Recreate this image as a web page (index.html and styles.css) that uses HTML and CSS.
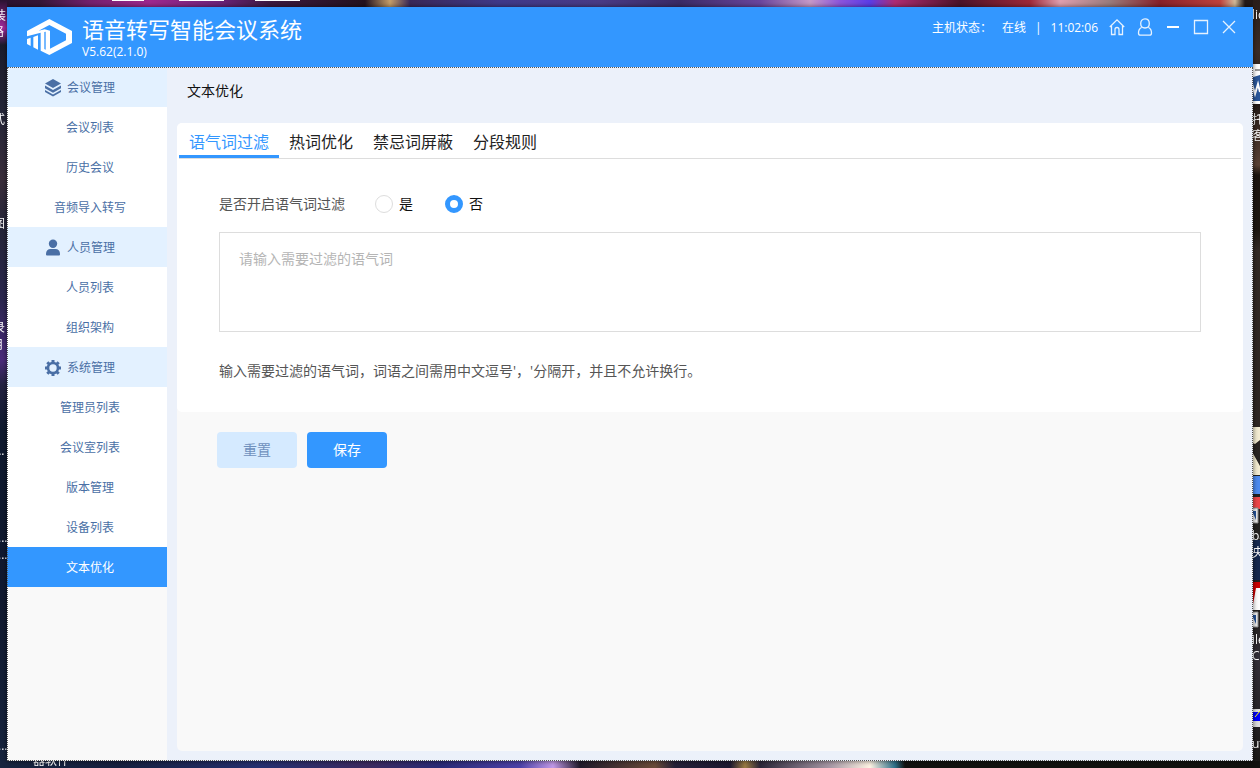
FILE: index.html
```html
<!DOCTYPE html>
<html lang="zh-CN">
<head>
<meta charset="utf-8">
<title>语音转写智能会议系统</title>
<link rel="stylesheet" href="styles.css">
</head>
<body>
<div class="desktop" aria-hidden="true">
  <div class="strip strip-top"></div>
  <div class="strip strip-left"></div>
  <div class="strip strip-right"></div>
  <div class="strip strip-bottom"></div>
  <svg class="tiles" width="30" height="768" viewBox="0 0 30 768">
    <path fill="#fff" d="M20 64h10v40H20z"/><path fill="#999" d="M25 69h5v2h-5z"/>
    <path fill="#2b579a" d="M20 78l10-3v26H20z"/><path stroke="#fff" stroke-width="2" fill="none" d="M22 84l3 10 3-10 2 8"/>
    <path fill="#f3ecd2" d="M20 427h10v13l-5 4-5-2zM20 448l10 18v9H20z"/>
    <path fill="#4d8bf0" d="M20 476h10v18H20z"/><path fill="#ee4548" d="M20 497h10v12H20z"/>
    <path fill="#15284f" d="M20 540h10v40H20z"/><path fill="#c00" d="M20 582h10v28H20z"/><path fill="#fff" d="M26 588h4v22h-8z"/>
    <path fill="#eee" stroke="#888" d="M20 508h8v15h-8zM20 612h8v15h-8z"/><path fill="#245399" d="M22 511h4v9zM22 615h4v9z"/>
    <path fill="#ddd" d="M20 709h10v18H20z"/><path fill="#00f" d="M20 712h10v9H20z"/><path stroke="#ff0" d="M25 717l5-6"/>
  </svg>
  <span class="label l1">装</span><span class="label l2">路</span><span class="label l3">式</span><span class="label l4">图</span><span class="label l5">录</span><span class="label l6">用</span>
  <span class="label d1">...</span><span class="label d2">...</span><span class="label d3">...</span><span class="label d4">...</span>
  <span class="label b1">器软件</span>
  <span class="label r1">lic</span><span class="label r2">托</span><span class="label r3">客</span><span class="label r4">ba</span><span class="label r5">央</span><span class="label r6">ile</span><span class="label r7">C</span><span class="label r8">ut</span>
</div>

<div class="window">
  <header class="titlebar">
    <svg class="logo" width="46" height="36" viewBox="9 11 138 108">
      <path fill="#fff" fill-rule="evenodd" d="M9 47L76 11L144 47V83L76 119L50 106V52L9 63ZM78 46V100L126 75V55L76 29L44 46L62 42Z"/>
      <path fill="#3397ff" d="M61 50L65 49V103L61 101Z"/>
      <path fill="#fff" d="M9 71L20 67V92L9 86ZM28 65L42 60V103L28 96Z"/>
    </svg>
    <div class="brand">
      <h1 class="brand-name">语音转写智能会议系统</h1>
      <span class="brand-version">V5.62(2.1.0)</span>
    </div>
    <div class="status">
      <span class="status-text">主机状态：</span><span class="status-text online">在线</span><span class="status-text divider">|</span><time class="status-text">11:02:06</time>
      <button class="icon-button" aria-label="主页"><svg width="16" height="18" viewBox="0 0 16 18"><path d="M.8 9L8 1.8 15.200 9M2.500 8v8.500h3.500v-5a2 2 0 0 1 4 0v5h3.500V8"/></svg></button>
      <button class="icon-button" aria-label="用户"><svg width="16" height="18" viewBox="0 0 16 18"><path d="M8 .8c2.600 0 4.300 2 4.300 4.700S10.500 10 8 10 3.700 8.200 3.700 5.500 5.400 .8 8 .8zM4.500 9.500C2.500 10.500 1.500 12.500 1.500 15c0 1.500 .5 2.200 2 2.200h9c1.500 0 2-.7 2-2.200 0-2.500-1-4.500-3-5.500"/></svg></button>
      <button class="icon-button" aria-label="最小化"><svg width="16" height="18" viewBox="0 0 16 18"><path class="bar" d="M2 9h12"/></svg></button>
      <button class="icon-button" aria-label="最大化"><svg width="16" height="18" viewBox="0 0 16 18"><path d="M1.500 2.500h13v13h-13z"/></svg></button>
      <button class="icon-button" aria-label="关闭"><svg width="16" height="18" viewBox="0 0 16 18"><path d="M2 3l12 12M14 3L2 15"/></svg></button>
    </div>
  </header>

  <div class="workspace">
    <nav class="sidebar">
      <div class="group"><svg width="18" height="18" viewBox="0 0 18 18"><path fill="currentColor" d="M9 0l8 4.500-8 4.500-8-4.500zM1 6.500l8 4.500 8-4.500v2.800l-8 4.500-8-4.500zM1 11l8 4.500 8-4.500v2L9 17.500 1 13z"/></svg>会议管理</div>
      <a class="item" href="#">会议列表</a>
      <a class="item" href="#">历史会议</a>
      <a class="item" href="#">音频导入转写</a>
      <div class="group"><svg width="18" height="18" viewBox="0 0 18 18"><circle cx="9" cy="4.700" r="4.200" fill="currentColor"/><path fill="currentColor" d="M2 15.500v-1c0-2.500 2-4.500 4.500-4.500h5c2.500 0 4.500 2 4.500 4.500v1q0 1-1 1h-12q-1 0-1-1z"/></svg>人员管理</div>
      <a class="item" href="#">人员列表</a>
      <a class="item" href="#">组织架构</a>
      <div class="group"><svg width="18" height="18" viewBox="0 0 18 18"><circle cx="9" cy="9" r="5" fill="none" stroke="currentColor" stroke-width="2.600"/><path stroke="currentColor" stroke-width="3" d="M9 1v3M9 14v3M1 9h3M14 9h3M3.300 3.300l2 2M12.700 12.700l2 2M3.300 14.700l2-2M12.700 5.300l2-2"/></svg>系统管理</div>
      <a class="item" href="#">管理员列表</a>
      <a class="item" href="#">会议室列表</a>
      <a class="item" href="#">版本管理</a>
      <a class="item" href="#">设备列表</a>
      <a class="item active" href="#" aria-current="page">文本优化</a>
    </nav>

    <main class="content">
      <h2 class="page-title">文本优化</h2>
      <form class="panel">
        <div class="card">
          <div class="tabs" role="tablist">
            <button type="button" class="tab selected" role="tab" aria-selected="true">语气词过滤</button>
            <button type="button" class="tab" role="tab">热词优化</button>
            <button type="button" class="tab" role="tab">禁忌词屏蔽</button>
            <button type="button" class="tab" role="tab">分段规则</button>
          </div>
          <div class="fields">
            <div class="choice" role="radiogroup" aria-labelledby="filter-label">
              <span class="choice-label" id="filter-label">是否开启语气词过滤</span>
              <label class="option"><input type="radio" name="filter" value="yes">是</label>
              <label class="option"><input type="radio" name="filter" value="no" checked>否</label>
            </div>
            <textarea class="words" placeholder="请输入需要过滤的语气词" aria-label="语气词"></textarea>
            <p class="help">输入需要过滤的语气词，词语之间需用中文逗号'，'分隔开，并且不允许换行。</p>
          </div>
        </div>
        <div class="actions">
          <button type="reset" class="button light">重置</button>
          <button type="button" class="button primary">保存</button>
        </div>
      </form>
    </main>
  </div>
</div>
</body>
</html>
```
FILE: styles.css
```css
* { box-sizing: border-box; }

body {
  margin: 0;
  min-height: 100vh;
  padding: 7px;
  display: flex;
  font: 14px/20px "Open Sans", "Noto Sans CJK SC", sans-serif;
  background: #1a1c2c;
}

button { font: inherit; border: 0; padding: 0; cursor: pointer; }

/* Desktop behind the window */
.desktop { position: fixed; inset: 0; overflow: hidden; }
.strip { position: absolute; }
.strip-top {
  top: 0; left: 0; right: 0; height: 7px;
  background:
    linear-gradient(#fff, #fff) 112px 0 / 32px 1px no-repeat,
    linear-gradient(#fff, #fff) 179px 0 / 45px 1px no-repeat,
    linear-gradient(#fff, #fff) 255px 0 / 45px 1px no-repeat,
    linear-gradient(90deg, #2a1230 0, #351638 40px, #75206e 90px, #a02890 150px, #6c2379 220px, #3d1940 270px, #24121f 365px, #c79f6a 390px, #3a2858 410px, #40398a 500px, #4a3b86 600px, #3b2b66 680px, #6b459d 760px, #c79ac8 810px, #8d55dc 840px, #5b3de8 870px, #b02c72 895px, #4c1329 960px, #a02838 1030px, #e0a0b0 1060px, #9b7c7c 1110px, #88202a 1160px, #c1423c 1220px, #d0ba9a 1235px, #241a18 1245px);
}
.strip-left {
  top: 0; bottom: 0; left: 0; width: 7px;
  background: linear-gradient(#2a1230 0, #a32aa0 28px, #1b1c2c 45px, #242638 110px, #3b2f3c 180px, #242539 230px, #2c2850 300px, #4a2b7c 360px, #232241 385px, #101b30 430px, #111a30 600px, #18253f 768px);
}
.strip-right {
  top: 0; bottom: 0; right: 0; width: 7px;
  background: linear-gradient(#2a1e1a 0, #3c2c25 50px, #241a16 105px, #5a4236 165px, #1c1510 175px, #1e1812 230px, #332a25 250px, #2e2724 425px, #222 480px, #24201e 620px, #33303a 660px, #1a1816 768px);
}
.strip-bottom {
  bottom: 0; left: 0; right: 0; height: 7px;
  background: linear-gradient(90deg, #18253f 0, #16203f 120px, #263070 260px, #3c2a60 370px, #2a2a76 440px, #4d42a8 520px, #c29ae8 553px, #211a2b 580px, #6b4c3a 655px, #252038 675px, #1c1830 730px, #9c7c44 745px, #2b2638 760px, #a899a6 830px, #fff4e4 870px, #2e7089 895px, #12110f 905px);
}
.tiles { position: absolute; top: 0; right: 0; }
.label { position: absolute; font-size: 12px; line-height: 16px; color: #fff; white-space: nowrap; }
.l1 { left: -6px; top: 8px; }
.l2 { left: -8px; top: 24px; }
.l3 { left: -7px; top: 112px; }
.l4 { left: -7px; top: 216px; }
.l5 { left: -7px; top: 320px; }
.l6 { left: -9px; top: 337px; }
.d1 { left: -5px; top: 443px; }
.d2 { left: -2px; top: 530px; }
.d3 { left: -2px; top: 547px; }
.d4 { left: -2px; top: 738px; }
.b1 { left: 33px; top: 753px; }
.r1 { left: 1252px; top: 7px; }
.r2 { left: 1252px; top: 112px; }
.r3 { left: 1252px; top: 128px; }
.r4 { left: 1252px; top: 528px; }
.r5 { left: 1252px; top: 545px; }
.r6 { left: 1252px; top: 632px; }
.r7 { left: 1252px; top: 648px; }
.r8 { left: 1252px; top: 736px; }

/* Application window */
.window { position: relative; flex: 1; display: flex; flex-direction: column; box-shadow: 0 0 5px rgba(0, 0, 0, .6); }

.titlebar {
  display: flex;
  height: 60px;
  padding: 0 16px 0 20px;
  background: #3397ff;
  color: #fff;
}
.logo { margin-top: 12px; }
.brand { flex: 1; display: flex; flex-direction: column; gap: 2px; padding: 8px 0 0 9px; }
.brand-name { margin: 0; font-size: 22px; line-height: 28px; font-weight: 400; }
.brand-version { font-size: 12px; line-height: 14px; }
.status { display: flex; align-items: center; height: 40px; font-size: 12px; }
.status-text { padding-top: 2px; }
.online { margin-left: 10px; }
.divider { margin: 0 9px; }
.icon-button { display: flex; margin-left: 12px; background: none; color: #fff; }
time + .icon-button { margin-left: 11px; }
.icon-button path { fill: none; stroke: #e6f2ff; stroke-width: 1.3; }
.icon-button .bar { stroke: #fff; stroke-width: 2; }

.workspace { flex: 1; display: flex; background: #ecf1fa; outline: 1px dotted #555; outline-offset: -1px; }

.sidebar { width: 160px; background: #f9f9f9; font-size: 12px; color: #4a6fa5; }
.group, .item { display: flex; align-items: center; height: 40px; padding-top: 2px; }
.group { gap: 5px; padding-left: 37px; background: #e3f1ff; }
.item { justify-content: center; padding-left: 6px; background: #fff; color: inherit; text-decoration: none; }
.item.active { background: #3397ff; color: #fff; }

.content { flex: 1; display: flex; flex-direction: column; padding: 0 10px 10px; }
.page-title { margin: 0; padding: 14px 10px 22px; font-size: 14px; line-height: 20px; font-weight: 400; color: #111; }
.panel { flex: 1; border-radius: 5px; background: #f9f9f9; }
.card { border-radius: 5px; background: #fff; }
.tabs { display: flex; margin: 0 2px; border-bottom: 1px solid #ddd; }
.tab {
  padding: 7px 10px 1px;
  border-bottom: 3px solid transparent;
  background: none;
  font-size: 16px;
  line-height: 24px;
  color: #222;
}
.tab.selected { border-color: #3397ff; color: #3397ff; }

.fields { padding: 35px 42px 31px; }
.choice { display: flex; align-items: center; }
.choice-label { margin-right: 30px; color: #555; }
.option { display: flex; align-items: center; gap: 6px; margin-right: 32px; color: #111; }
.option input {
  appearance: none;
  width: 18px;
  height: 18px;
  margin: 0;
  border: 1px solid #ddd;
  border-radius: 50%;
  background: #fff;
}
.option input:checked { border: 5px solid #3397ff; }
.words {
  display: block;
  width: 100%;
  height: 100px;
  margin: 18px 0 29px;
  padding: 16px 19px;
  border: 1px solid #ddd;
  font: inherit;
  resize: none;
}
.words::placeholder { color: #b5b5b5; }
.help { margin: 0; color: #555; }

.actions { display: flex; gap: 10px; padding: 20px 40px; }
.button { width: 80px; height: 36px; border-radius: 4px; }
.light { background: #d5eaff; color: #7091bd; }
.primary { background: #3397ff; color: #fff; }
```
